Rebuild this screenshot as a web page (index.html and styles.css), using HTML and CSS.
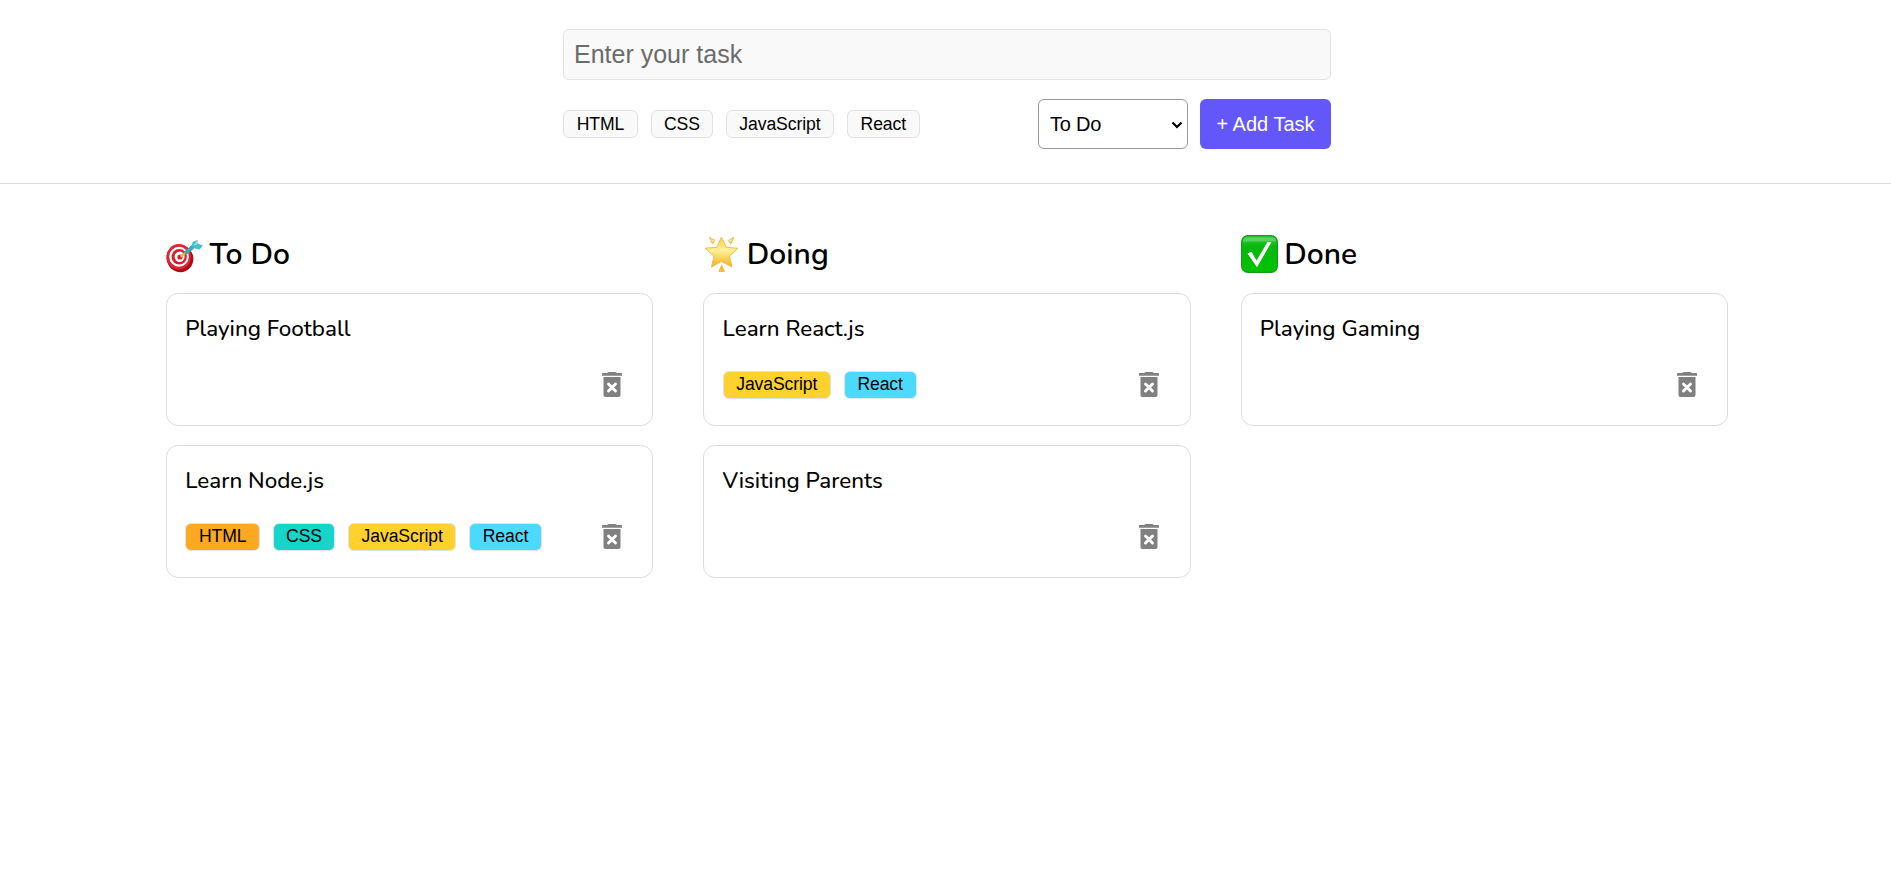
FILE: index.html
```html
<!DOCTYPE html>
<html lang="en">
<head>
<meta charset="utf-8">
<title>Task Board</title>
<link rel="stylesheet" href="styles.css">
</head>
<body>
<svg class="defs" width="0" height="0" aria-hidden="true">
  <symbol id="trash" viewBox="0 0 20 26">
    <path fill="#808080" d="M0 1.600Q0 1 .8 1H5L6.200.2Q6.600 0 7 0h6q.4 0 .8.2L15 1h4.200Q20 1 20 1.600V3.800H0zM1.500 5H18.500V23q0 2-2 2H3.500q-2 0-2-2z"/>
    <path d="m6.500 12 7 7m0-7-7 7" stroke="#fff" stroke-width="2.900" stroke-linecap="round"/>
  </symbol>
</svg>
<header class="head">
  <form class="form">
    <input class="task-input" type="text" placeholder="Enter your task">
    <div class="form-row">
      <div class="tags">
        <button type="button" class="tag html">HTML</button>
        <button type="button" class="tag css">CSS</button>
        <button type="button" class="tag js">JavaScript</button>
        <button type="button" class="tag react">React</button>
      </div>
      <div class="actions">
        <div class="select-wrap">
          <select class="status"><option>To Do</option><option>Doing</option><option>Done</option></select>
          <svg class="chevron" viewBox="0 0 12 8"><path d="m1.500 1.500 4.500 4.500 4.500-4.500" fill="none" stroke="#000" stroke-width="2.200"/></svg>
        </div>
        <button type="button" class="submit">+ Add Task</button>
      </div>
    </div>
  </form>
</header>
<main class="board">
  <section class="column">
    <h2 class="heading">
      <svg class="emoji" viewBox="0 0 37 38">
        <ellipse cx="14" cy="23.500" rx="13.300" ry="13.800" fill="#a50f1c" transform="rotate(-25 14 23.500)"/>
        <ellipse cx="12.800" cy="21.800" rx="12.300" ry="12.800" fill="#e0242f"/>
        <ellipse cx="13" cy="21.800" rx="9.800" ry="10" fill="#fff"/>
        <ellipse cx="13.200" cy="21.800" rx="7.600" ry="7.800" fill="#d51f2b"/>
        <ellipse cx="13.600" cy="21.800" rx="5" ry="5.200" fill="#fff"/>
        <circle cx="14" cy="22" r="2.600" fill="#d51f2b"/>
        <path d="M14.500 21.800 20.500 17" stroke="#e5b73a" stroke-width="2.400"/>
        <path d="M19 18.500 29 10" stroke="#38a9b6" stroke-width="4"/>
        <path d="M26 11 26.500 7 31.500 5 31.500 8.500 37 10.500 33.500 14.500 29 13.500z" fill="#48bdca"/>
        <path d="m27 11 4.500-6 .5 3.700z" fill="#8be2e6"/>
      </svg>
      <span class="label">To Do</span>
    </h2>
    <article class="card">
      <p class="title">Playing Football</p>
      <div class="bottom"><div class="tags"></div><button class="delete" aria-label="Delete"><svg width="20" height="26"><use href="#trash"/></svg></button></div>
    </article>
    <article class="card">
      <p class="title">Learn Node.js</p>
      <div class="bottom"><div class="tags"><span class="tag html on">HTML</span><span class="tag css on">CSS</span><span class="tag js on">JavaScript</span><span class="tag react on">React</span></div><button class="delete" aria-label="Delete"><svg width="20" height="26"><use href="#trash"/></svg></button></div>
    </article>
  </section>
  <section class="column">
    <h2 class="heading">
      <svg class="emoji" viewBox="0 0 37 38">
        <defs>
          <linearGradient id="gold" x1="0" y1="0" x2="0" y2="1"><stop offset="0" stop-color="#ffd02c"/><stop offset=".45" stop-color="#fff09a"/><stop offset="1" stop-color="#f5b01c"/></linearGradient>
        </defs>
        <g fill="url(#gold)" stroke="#f0b93c" stroke-width=".9" stroke-linejoin="round">
          <path d="M18.500 2 23.200 12.300 35 13.200 26.500 21 29 32 18.500 26.500 8.500 32 11 21 2 13.200 13.800 12.300z"/>
          <path d="M6.500 2.500 12 5.500 9.500 9zM30.800 2.500 25.200 5.500 27.800 9z"/>
          <path d="M18.500 30 21.500 36.500H16z" fill="#f3bc2e"/>
        </g>
      </svg>
      <span class="label">Doing</span>
    </h2>
    <article class="card">
      <p class="title">Learn React.js</p>
      <div class="bottom"><div class="tags"><span class="tag js on">JavaScript</span><span class="tag react on">React</span></div><button class="delete" aria-label="Delete"><svg width="20" height="26"><use href="#trash"/></svg></button></div>
    </article>
    <article class="card">
      <p class="title">Visiting Parents</p>
      <div class="bottom"><div class="tags"></div><button class="delete" aria-label="Delete"><svg width="20" height="26"><use href="#trash"/></svg></button></div>
    </article>
  </section>
  <section class="column">
    <h2 class="heading">
      <svg class="emoji" viewBox="0 0 37 38">
        <defs>
          <linearGradient id="green" x1="0" y1="0" x2="0" y2="1"><stop offset="0" stop-color="#35c93e"/><stop offset=".3" stop-color="#08b80c"/><stop offset="1" stop-color="#00c400"/></linearGradient>
        </defs>
        <rect x=".6" y=".6" width="35.800" height="36.800" rx="6.500" fill="url(#green)" stroke="#159a1b" stroke-width="1.200"/>
        <path d="M5 2.500H32Q35 3.500 35 6.500H2Q2 3.500 5 2.500z" fill="#7be080" opacity=".6"/>
        <path d="M6.500 18.500 10.500 16.700 15.500 25.500 26.500 7H30.500L16 32.200z" fill="#fff"/>
      </svg>
      <span class="label">Done</span>
    </h2>
    <article class="card">
      <p class="title">Playing Gaming</p>
      <div class="bottom"><div class="tags"></div><button class="delete" aria-label="Delete"><svg width="20" height="26"><use href="#trash"/></svg></button></div>
    </article>
  </section>
</main>
</body>
</html>
```
FILE: styles.css
```css
* { box-sizing: border-box; margin: 0; padding: 0; }

body {
  background: #fff;
  color: #000;
  font-family: Nunito, "Noto Sans", sans-serif;
}

.defs { display: block; }

.head {
  height: 184px;
  padding-top: 29px;
  border-bottom: 1px solid #dcdcdc;
}

.form { width: 768px; margin-left: 563px; }

.task-input {
  display: block;
  width: 100%;
  height: 51px;
  padding: 0 10px;
  border: 1px solid #dfe3e6;
  border-radius: 6px;
  background: #f9f9f9;
  font: 25px "Liberation Sans", Arial, sans-serif;
}

.task-input::placeholder { color: #6b6b6b; }

.form-row {
  display: flex;
  align-items: center;
  justify-content: space-between;
  margin-top: 19px;
}

.tags, .actions { display: flex; gap: 12.600px; }
.actions { gap: 12px; }

.tag {
  height: 28px;
  border: 1px solid #dfe3e6;
  border-radius: 6px;
  background: #f9f9f9;
  color: #000;
  font: 17.600px/26px "Liberation Sans", Arial, sans-serif;
  letter-spacing: -.1px;
  text-align: center;
}

.tag.html { width: 75px; }
.tag.css { width: 62.500px; }
.tag.js { width: 108.500px; }
.tag.react { width: 73px; }

.html.on { background: #fda821; }
.css.on { background: #15d4c8; }
.js.on { background: #ffd12c; }
.react.on { background: #4cdafc; }
.tag.on { line-height: 24px; }

.select-wrap { position: relative; }

.status {
  display: block;
  width: 150px;
  height: 50px;
  padding: 0 11px;
  appearance: none;
  border: 1px solid #999;
  border-radius: 6px;
  background: #fff;
  color: #000;
  font: 20px "Liberation Sans", Arial, sans-serif;
  letter-spacing: -.2px;
}

.chevron {
  position: absolute;
  top: 22px;
  right: 5px;
  width: 12px;
  height: 8px;
  pointer-events: none;
}

.submit {
  width: 131px;
  height: 50px;
  border: 0;
  border-radius: 6px;
  background: #6457f9;
  color: #fff;
  font: 20px "Liberation Sans", Arial, sans-serif;
}

.board {
  display: grid;
  grid-template-columns: repeat(3, 1fr);
  gap: 50px;
  width: 1562px;
  margin: 51px 0 0 166px;
}

.heading {
  display: flex;
  align-items: center;
  gap: 6.500px;
  height: 38px;
  margin-bottom: 20px;
  font-size: 30px;
  font-weight: 600;
}

.emoji { width: 37px; height: 38px; }

.card {
  height: 133px;
  margin-bottom: 19px;
  padding: 19px 30.500px 0 18.200px;
  border: 1px solid #dcdcdc;
  border-radius: 12px;
}

.title {
  height: 32px;
  font-size: 22.400px;
  font-weight: 500;
  line-height: 32px;
}

.bottom {
  display: flex;
  align-items: center;
  justify-content: space-between;
  height: 28px;
  margin-top: 26px;
}

.delete {
  width: 20px;
  height: 26px;
  border: 0;
  background: none;
}

.delete svg { display: block; }
```
